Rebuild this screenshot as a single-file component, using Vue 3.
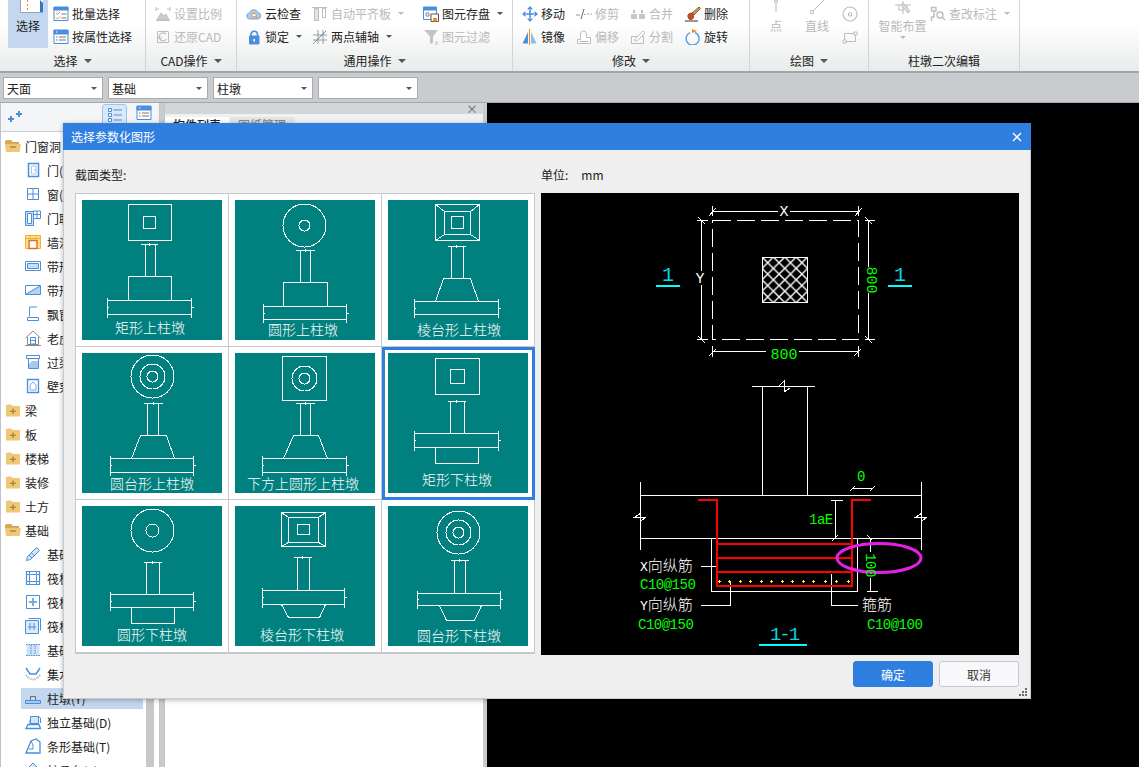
<template>
  <div class="app">
    <div class="ribbon">
      <div
        v-for="g in groups"
        :key="g.title"
        class="group"
        :style="{ width: g.width + 'px', paddingLeft: g.pad + 'px' }"
      >
        <div class="group-body">
          <div
            v-for="(col, i) in g.cols"
            :key="i"
            class="col"
            :style="{ width: col.width + 'px' }"
          >
            <div
              v-for="it in col.items"
              :key="it.label"
              :class="col.big ? 'big-item' : 'item'"
              :data-off="it.off ? 1 : null"
              :data-active="it.active ? 1 : null"
            >
              <Ico :name="it.icon" :size="col.big ? it.size || 16 : 16" />
              <span>{{ it.label }}</span>
              <i v-if="it.caret" class="caret small"></i>
            </div>
          </div>
        </div>
        <div class="group-title" :style="{ paddingRight: g.pad + 'px' }">
          {{ g.title }}<i v-if="g.caret" class="caret"></i>
        </div>
      </div>
    </div>

    <div class="selectors">
      <div v-for="(s, i) in selectors" :key="i" class="select">
        <span>{{ s }}</span><i class="caret small"></i>
      </div>
    </div>

    <div class="main">
      <div class="tree-panel">
        <div class="tree-tools">
          <Ico name="sparkle" class="sparkle" />
          <span class="tool-btn active"><Ico name="listview" /></span>
          <span class="tool-btn"><Ico name="attr" /></span>
        </div>
        <div class="tree-wrap">
          <div class="tree">
            <div
              v-for="r in tree"
              :key="r.label + r.icon"
              class="row"
              :class="{ child: r.child, selected: r.selected }"
            >
              <div class="row-in">
                <Ico :name="r.icon" />
                <span>{{ r.label }}</span>
              </div>
            </div>
          </div>
          <div class="scrollbar"></div>
        </div>
      </div>

      <div class="list-panel">
        <div class="list-head">×</div>
        <div class="tabs">
          <span class="tab on">构件列表</span>
          <span class="tab">图纸管理</span>
        </div>
      </div>
      <div class="canvas"></div>
    </div>

    <div class="dialog">
      <div class="dialog-title">
        <span>选择参数化图形</span>
        <svg width="10" height="10" viewBox="0 0 10 10">
          <path d="M1 1l8 8M9 1l-8 8" stroke="#fff" stroke-width="1.4" />
        </svg>
      </div>

      <div class="dialog-content">
        <div class="pane-left">
          <div class="pane-head">截面类型:</div>
          <div class="grid-wrap">
            <div class="tile-grid">
              <div
                v-for="t in tiles"
                :key="t.label"
                class="cell"
                :class="{ selected: t.selected }"
              >
                <svg class="tile" width="140" height="140" viewBox="0 0 140 140">
                  <g transform="translate(.5 .5)">
                    <path class="cad" :d="t.d" />
                    <circle
                      v-for="(c, i) in t.circles"
                      :key="i"
                      class="cad"
                      :cx="c[0]"
                      :cy="c[1]"
                      :r="c[2]"
                    />
                  </g>
                  <text class="tile-label" :x="t.lx" :y="t.ly">{{ t.label }}</text>
                </svg>
              </div>
            </div>
          </div>
        </div>

        <div class="pane-right">
          <div class="pane-head unit"><span>单位:</span><span>mm</span></div>
          <svg class="preview" width="478" height="462" viewBox="541 193 478 462">
            <defs>
              <pattern id="hatch" width="11.4" height="11.4" patternUnits="userSpaceOnUse" x="762" y="257">
                <path d="M0 0L11.4 11.4M11.4 0L0 11.4" stroke="#fff" stroke-width="1.4" />
              </pattern>
            </defs>

            <!-- plan view -->
            <g class="lines">
              <path class="dash" d="M712.5 220.5H858.5V339.5H712.5Z" />
              <rect x="762.5" y="257.5" width="45" height="45" fill="url(#hatch)" />
              <path d="M712 211.5H778M790 211.5H858M712.5 206V216M858.5 206V216M709 216L716 208M855 216L862 208" />
              <path d="M701.5 220V271M701.5 285V339M697 220.5H708M697 339.5H708M698 217L705 224M698 336L705 343" />
              <path d="M868.5 220V267M868.5 293V339M865 220.5H875M865 339.5H875M865 217L872 224M865 336L872 343" />
              <path d="M712 351.5H766M799 351.5H858M712.5 346V357M858.5 346V357M709 356L716 349M854 356L861 349" />
            </g>
            <text class="mono letter" x="784" y="216" text-anchor="middle">X</text>
            <text class="mono letter" x="700" y="283" text-anchor="middle">Y</text>
            <text class="mono green dim-text" x="784" y="359" text-anchor="middle">800</text>
            <text class="mono green dim-text" transform="translate(867 280) rotate(90)" text-anchor="middle">800</text>
            <text class="mono cyan sect" x="668" y="281" text-anchor="middle">1</text>
            <text class="mono cyan sect" x="900" y="281" text-anchor="middle">1</text>
            <path class="cyan-line" d="M656 286H680M888 286H912M759 645H807" />

            <!-- section view -->
            <g class="lines">
              <path d="M752 386.5H815M762.5 386V495M807.5 386V495M779 386L784 381V392L790 388" />
              <path d="M640 495.5H922M640 538.5H922M640.5 482V550M921.5 482V550" />
              <path d="M641 513L635 517H646L641 521M922 513L916 517H927L922 521" />
              <path d="M711.5 538V591.5H857.5V538" />
              <path d="M852 488.5H872M850 491L855 486M870 491L875 486" />
              <path d="M835.5 500V538M831 500.5H843M832 541L838 535" />
              <path d="M870.5 538V552M870.5 578V591M867 591.5H878M867 535L872 540" />
              <path d="M701 566.5H717M701 605.5H730.5V581" />
              <path d="M831.5 574V605.5H858" />
            </g>
            <path class="rebar" d="M698 500H717V586H852V500H871" />
            <path class="rebar" d="M717 544H852M717 558H852M717 572H852" />
            <path
              v-for="x in rebarDots"
              :key="x"
              class="dot"
              :d="`M${x - 1.5} 581.5h3M${x} 580v3`"
            />
            <ellipse class="loop" cx="879" cy="558" rx="42" ry="14.5" />

            <text class="mono green code" x="861" y="481" text-anchor="middle">0</text>
            <text class="mono green code" x="809" y="524">1aE</text>
            <text class="mono green code" transform="translate(866 565) rotate(90)" text-anchor="middle">100</text>
            <text class="mono white" x="640" y="571">X<tspan class="cjk">向纵筋</tspan></text>
            <text class="mono green code" x="640" y="589">C10@150</text>
            <text class="mono white" x="640" y="610">Y<tspan class="cjk">向纵筋</tspan></text>
            <text class="mono green code" x="638" y="629">C10@150</text>
            <text class="mono white" x="862" y="610"><tspan class="cjk">箍筋</tspan></text>
            <text class="mono green code" x="867" y="629">C10@100</text>
            <text class="mono cyan sect-title" x="784" y="640" text-anchor="middle">1-1</text>
          </svg>
        </div>
      </div>

      <div class="dialog-foot">
        <button class="btn primary">确定</button>
        <button class="btn">取消</button>
        <svg class="grip" width="8" height="8" viewBox="0 0 8 8">
          <path d="M6 0h2v2H6zM3 3h2v2H3zM6 3h2v2H6zM0 6h2v2H0zM3 6h2v2H3zM6 6h2v2H6z" fill="#6d6d6d" />
        </svg>
      </div>
    </div>
  </div>
</template>

<script setup>
import { h } from 'vue'

const BLUE = '#4a8fdc'
const GRAY = '#bdbdbd'
const ORG = '#ef8a21'
const TAN = '#eec877'

// [path, stroke, fill, strokeWidth, dash]
const icons = {
  select: [
    ['M0.5 0V12.5H29.5V0', '#8fa7c6', '#fff'],
    ['M7.5 0V12', ORG, 'none', 1, '2 2'],
    ['M20 0L29 9V12H20Z', 'none', '#2f78c4'],
  ],
  batch: [
    ['M1 1.5H15V14.5H1Z', BLUE, '#fff'],
    ['M1 1H15V4H1Z', BLUE, BLUE],
    ['M3 7l1.5 1.5L7 6M3 11.5L4.5 13 7 10.5', ORG, 'none'],
    ['M8.5 8H13.5M8.5 12H13.5', '#777', 'none'],
  ],
  attr: [
    ['M1 1.5H15V14.5H1Z', BLUE, '#fff'],
    ['M1 1H15V5H1Z', BLUE, BLUE],
    ['M3 3H4.5', '#fff', 'none'],
    ['M3 8H4.5M6 8H13M3 11H4.5M6 11H13', '#777', 'none'],
  ],
  listview: [
    ['M1.5 2.5H4.5V5.5H1.5ZM1.5 7.5H4.5V10.5H1.5ZM1.5 12.5H4.5V15.5H1.5Z', BLUE, '#fff'],
    ['M6.5 4H15M6.5 9H15M6.5 14H15', BLUE, 'none'],
  ],
  sparkle: [
    ['M1 11H7M4 8V14M9 6H15M12 3V9', BLUE, 'none', 2],
  ],
  scale: [
    ['M1 3H4M1 1V5M12 3H15M15 1V5M1 14.5H15', GRAY, 'none'],
    ['M2 14L6 7L9 10L11 8L14 14Z', GRAY, '#ccc'],
  ],
  restore: [
    ['M2.5 2.5H13.5V13.5H2.5Z', GRAY, 'none'],
    ['M11 5A4 4 0 1 0 11.5 10M5 6L3.5 9L7 9', GRAY, 'none', 1.2],
  ],
  cloud: [
    ['M4 13A3 3 0 0 1 3.5 7A4.5 4.5 0 0 1 12 6.5A3.3 3.3 0 0 1 12 13Z', '#78a9dc', '#a9ccef'],
    ['M8 7.5A1.8 1.8 0 1 1 8 11A1.8 1.8 0 1 1 8 7.5M9.5 10.5L11.5 12', ORG, '#fff'],
  ],
  lock: [
    ['M5 7V5A3.3 3.3 0 0 1 11.5 5V7', BLUE, 'none', 1.6],
    ['M3.5 7H13V15H3.5Z', BLUE, BLUE],
    ['M8.2 10V12.5', '#fff', 'none', 1.6],
  ],
  align: [
    ['M0 1.5H15', GRAY, 'none'],
    ['M2.5 2.5H6.5V14.5H2.5Z', GRAY, '#e4e4e4'],
    ['M10.5 2.5H13.5V11.5H10.5Z', GRAY, '#fff'],
  ],
  axis: [
    ['M1 6H15M1 11H15M6 1V15M11 1V15', '#9a9a9a', 'none'],
    ['M1 15L14 2', ORG, 'none'],
    ['M3 13L14 2', BLUE, 'none'],
  ],
  save: [
    ['M0.5 1.5H13.5V13.5H0.5Z', BLUE, '#fff'],
    ['M0.5 1H13.5V4H0.5Z', BLUE, BLUE],
    ['M3 7H6V10H3Z', '#888', 'none'],
    ['M8 8H15.5V15.5H8Z', '#555', '#fff'],
    ['M10 12H14V15.5H10Z', 'none', ORG],
  ],
  filter: [
    ['M1 1H15L10 7.5V14L7 15V7.5Z', 'none', '#c4c4c4'],
    ['M12 13H15M12 15H15', GRAY, 'none'],
  ],
  move: [
    ['M8 4V12M4 8H12', BLUE, 'none', 1.6],
    ['M8 0L11 3.5H5ZM8 16L5 12.5H11ZM0 8L3.5 5V11ZM16 8L12.5 11V5Z', 'none', BLUE],
  ],
  mirror: [
    ['M0.5 14.5L6 3V14.5Z', 'none', BLUE],
    ['M9 3L14.5 14.5H9Z', 'none', '#8cbbea'],
    ['M7.5 0V16', ORG, 'none'],
  ],
  trim: [
    ['M0 9H4M11 8H13M14.5 8H16M8 8.5H9.5', '#999', 'none'],
    ['M5 13L8 3', '#666', 'none'],
  ],
  offset: [
    ['M1.5 14.5V10.5H4.5V5A3 3 0 0 1 10.5 5V8.5H14.5V14.5Z', GRAY, '#fff'],
    ['M3.5 12.5H12.5', GRAY, 'none'],
  ],
  merge: [
    ['M1 8H7V13H1ZM9 8H15V13H9Z', 'none', '#c8c8c8'],
    ['M4 4V7M12 4V7', GRAY, 'none', 2],
  ],
  split: [
    ['M1.5 7.5H13.5V14.5H1.5Z', GRAY, 'none'],
    ['M5 10L13 2L15 4L7 12H5Z', GRAY, '#fff'],
  ],
  del: [
    ['M0 15H13', '#333', 'none'],
    ['M7 7L14 1L15.5 2.5L9 9Z', '#876236', '#c49a63'],
    ['M3 11A3 3 0 0 1 8 8L8.5 9.5A3 3 0 0 1 4 13Z', '#a4421c', '#c8501f'],
  ],
  rotate: [
    ['M10 3.5A6.5 6.5 0 1 1 5 3.6', '#5b9be0', 'none', 1.4],
    ['M7 4V0L12 2Z', 'none', ORG],
  ],
  point: [['M8 0V12', GRAY, 'none'], ['M6.5 0H9.5V2H6.5Z', GRAY, '#fff']],
  line: [['M3 12L15 0', GRAY, 'none'], ['M1.5 10.5H4.5V13.5H1.5Z', GRAY, '#fff']],
  circle: [
    ['M8 1A7 7 0 1 1 8 15A7 7 0 1 1 8 1Z', GRAY, 'none', 1.2],
    ['M6.5 7H9.5V10H6.5Z', GRAY, '#fff'],
  ],
  rect: [
    ['M2.5 4.5H13.5V12.5H2.5Z', GRAY, 'none'],
    ['M1 11H4V14H1ZM12 3H15V6H12Z', GRAY, '#fff'],
  ],
  smart: [
    ['M0 5H16M4 5V10M8 1V14M12 5V10M3 10H9', GRAY, 'none'],
    ['M8 3L15 11L13 13L6 5Z', GRAY, '#ddd'],
  ],
  review: [
    ['M1.5 1.5H6V5H1.5ZM4 5V11H1.5V15', GRAY, 'none', 1.4],
    ['M10 6A3 3 0 1 1 10 12A3 3 0 1 1 10 6M12 11L15 14', GRAY, '#fff', 1.4],
  ],
  folderOpen: [
    ['M0 3.5Q0 2 2 2H6L8 4H14V6H0Z', 'none', '#d8a957'],
    ['M0 6H16L14.5 14H1Z', 'none', TAN],
    ['M5 9H11', '#b4873c', 'none', 1.5],
  ],
  folder: [
    ['M1 4Q1 2.5 2.5 2.5H6L7.5 4H15V14.5H1Z', 'none', TAN],
    ['M8 6.5V12M5.2 9.2H10.8', '#b4873c', 'none', 1.5],
  ],
  door: [
    ['M3.5 1.5H13.5V14.5H3.5Z', BLUE, '#fff', 1.5],
    ['M6.5 4H11V12H6.5Z', '#a9c6e8', 'none'],
    ['M9.5 8H10.5', BLUE, 'none'],
  ],
  win: [
    ['M2.5 2.5H13.5V13.5H2.5Z', BLUE, '#fff'],
    ['M8 2.5V13.5M2.5 8H13.5', BLUE, 'none'],
  ],
  doorwin: [
    ['M0.5 1.5H8.5V15.5H0.5Z', BLUE, '#cfe0f5'],
    ['M2.5 3.5H6.5V13.5H2.5Z', BLUE, '#fff'],
    ['M8.5 1H15.5V8.5H8.5ZM12 1V8.5M8.5 4.5H15.5', BLUE, '#fff'],
  ],
  wall: [
    ['M0.5 1.5H15.5V14.5H0.5Z', '#f0b232', '#ffdf87'],
    ['M0.5 4.5H15.5M5 1.5V5M11 1.5V5', '#f0b232', 'none'],
    ['M4 6.5H12V14.5H4Z', '#e26c22', '#fff', 1.4],
  ],
  bandwin: [
    ['M0.5 3.5H15.5V12.5H0.5Z', BLUE, '#fff'],
    ['M2.5 5.5H13.5V10.5H2.5Z', BLUE, '#c8ddf3'],
  ],
  bandhole: [
    ['M0.5 3.5H15.5V12.5H0.5Z', BLUE, '#fff'],
    ['M1 12L15 4V12Z', 'none', '#b5d2f0'],
    ['M1 12L15 4', BLUE, 'none'],
  ],
  bay: [
    ['M4.5 1V10.5M4.5 1H12', '#5a8fc9', 'none'],
    ['M2.5 11.5H13.5V14.5H2.5Z', BLUE, '#fff'],
  ],
  house: [
    ['M0.5 8L8 1L15.5 8', '#888', 'none'],
    ['M2.5 7V14.5H13.5V7', '#888', 'none'],
    ['M5.5 7.5H10.5V14H5.5ZM5.5 10.5H10.5', BLUE, '#fff'],
    ['M0 15.5H16', '#888', 'none'],
  ],
  lintel: [
    ['M1.5 1.5H14.5V4.5H1.5Z', BLUE, '#fff'],
    ['M3.5 4.5V14.5H13.5V4.5', BLUE, 'none'],
    ['M4 14L4 10L7 7H13V14Z', 'none', '#a9c8ea'],
  ],
  niche: [
    ['M2.5 1.5H13.5V14.5H2.5Z', BLUE, '#fff', 1.3],
    ['M5 12V7L8 4L11 7V12Z', '#7daadf', 'none'],
  ],
  pencil: [
    ['M1.5 14.5L2.5 10.5L11.5 1.5L14.5 4.5L5.5 13.5Z', BLUE, '#d7e6f7'],
    ['M4 9L7 12M6.5 7L9 9.5', BLUE, 'none'],
  ],
  raft: [
    ['M1.5 1.5H14.5V14.5H1.5Z', BLUE, '#fff', 1.2],
    ['M4.5 4.5H11.5V11.5H4.5ZM1 4.5H4M12 4.5H15M1 11.5H4M12 11.5H15M4.5 1V4M11.5 1V4M4.5 12V15M11.5 12V15', BLUE, 'none'],
  ],
  cross: [
    ['M1.5 1.5H14.5V14.5H1.5Z', BLUE, '#fff'],
    ['M8 4V12M4 8H12', '#7daadf', 'none', 2],
  ],
  stack: [
    ['M3.5 0.5H15.5V12.5', BLUE, 'none'],
    ['M0.5 2.5H13.5V15.5H0.5Z', BLUE, '#dce9f7'],
    ['M5 5V12M9 5V12M3 9H11', BLUE, 'none'],
  ],
  strip: [
    ['M1.5 2H14.5V14H1.5Z', 'none', '#cfe2f6'],
    ['M1 2.5H15M1 13.5H15M6 3V13M10 3V13', BLUE, 'none', 1, '1.5 1'],
  ],
  pit: [
    ['M1 2L5 8H11L15 2', BLUE, 'none', 1.5],
    ['M1 9Q8 18 15 9', '#aaa', 'none', 2, '1 1'],
  ],
  pier: [
    ['M5.5 6.5H10.5V10.5H5.5Z', '#6d6d6d', 'none'],
    ['M0.5 10.5H15.5V13.5H0.5Z', BLUE, '#a8caee'],
  ],
  iso: [
    ['M5.5 2.5H13.5V9.5H5.5Z', BLUE, '#d5e5f6'],
    ['M1 14.5L3 10.5H14L15.5 14.5Z', BLUE, '#fff', 1.3],
    ['M5 10V6M13.5 2.5L15.5 4V9', BLUE, 'none'],
  ],
  stripf: [
    ['M1 15L3.5 9L6 3L11 1L15 4V15Z', BLUE, '#fff', 1.3],
    ['M6 3L8 7V11H4', BLUE, 'none'],
  ],
  cap: [['M8 1L14 7H2Z', BLUE, '#dce9f7']],
}

// small functional component, the same svg is needed in ribbon and tree
const Ico = (props) =>
  h(
    'svg',
    { width: props.size || 16, height: props.size || 16, viewBox: '0 0 16 16', style: 'flex:none;display:block' },
    (icons[props.name] || []).map(([d, stroke, fill, sw, dash]) =>
      h('path', { d, stroke, fill, 'stroke-width': sw || 1, 'stroke-dasharray': dash })
    )
  )
Ico.props = ['name', 'size']

const item = (icon, label, extra = {}) => ({ icon, label, ...extra })

const groups = [
  {
    title: '选择', caret: true, width: 146, pad: 8,
    cols: [
      { big: true, width: 45, items: [item('select', '选择', { active: true, size: 16 })] },
      { width: 85, items: [item('batch', '批量选择'), item('attr', '按属性选择')] },
    ],
  },
  {
    title: 'CAD操作', caret: true, width: 91, pad: 9,
    cols: [{ width: 80, items: [item('scale', '设置比例', { off: true }), item('restore', '还原CAD', { off: true })] }],
  },
  {
    title: '通用操作', caret: true, width: 276, pad: 9,
    cols: [
      { width: 66, items: [item('cloud', '云检查'), item('lock', '锁定', { caret: true })] },
      { width: 111, items: [item('align', '自动平齐板', { off: true, caret: true }), item('axis', '两点辅轴', { caret: true })] },
      { width: 85, items: [item('save', '图元存盘', { caret: true }), item('filter', '图元过滤', { off: true })] },
    ],
  },
  {
    title: '修改', caret: true, width: 237, pad: 9,
    cols: [
      { width: 54, items: [item('move', '移动'), item('mirror', '镜像')] },
      { width: 54, items: [item('trim', '修剪', { off: true }), item('offset', '偏移', { off: true })] },
      { width: 55, items: [item('merge', '合并', { off: true }), item('split', '分割', { off: true })] },
      { width: 55, items: [item('del', '删除'), item('rotate', '旋转')] },
    ],
  },
  {
    title: '绘图', caret: true, width: 119, pad: 10,
    cols: [
      { big: true, width: 32, items: [item('point', '点', { off: true })] },
      { big: true, width: 50, items: [item('line', '直线', { off: true })] },
      { width: 22, items: [item('circle', '', { off: true }), item('rect', ' ', { off: true })] },
    ],
  },
  {
    title: '柱墩二次编辑', caret: false, width: 151, pad: 6,
    cols: [
      { big: true, width: 55, items: [item('smart', '智能布置', { off: true, caret: true })] },
      { width: 85, items: [item('review', '查改标注', { off: true, caret: true })] },
    ],
  },
]

const selectors = ['天面', '基础', '柱墩', '']

const child = (icon, label, selected = false) => ({ icon, label, child: true, selected })
const tree = [
  { icon: 'folderOpen', label: '门窗洞' },
  child('door', '门(M)'),
  child('win', '窗(C)'),
  child('doorwin', '门联窗(A)'),
  child('wall', '墙洞(D)'),
  child('bandwin', '带形窗(C)'),
  child('bandhole', '带形洞'),
  child('bay', '飘窗(F)'),
  child('house', '老虎窗'),
  child('lintel', '过梁(G)'),
  child('niche', '壁龛(I)'),
  { icon: 'folder', label: '梁' },
  { icon: 'folder', label: '板' },
  { icon: 'folder', label: '楼梯' },
  { icon: 'folder', label: '装修' },
  { icon: 'folder', label: '土方' },
  { icon: 'folderOpen', label: '基础' },
  child('pencil', '基础梁(F)'),
  child('raft', '筏板基础(M)'),
  child('cross', '筏板主筋(R)'),
  child('stack', '筏板负筋(F)'),
  child('strip', '基础板带(W)'),
  child('pit', '集水坑(K)'),
  child('pier', '柱墩(Y)', true),
  child('iso', '独立基础(D)'),
  child('stripf', '条形基础(T)'),
  child('cap', '桩承台(V)'),
]

// thumbnail drawing helpers, coordinates are local to the 140px tile
const slab = (x1, x2, y1, y2) => {
  const mid = Math.round((y1 + y2) / 2)
  return `M${x1} ${y1}H${x2}M${x1} ${y2}H${x2}M${x1} ${y1 - 3}V${y2 + 3}M${x2} ${y1 - 3}V${y2 + 3}M${x1 - 1} ${mid}h2M${x2 - 1} ${mid}h3`
}
const column = (lx1, lx2, x1, x2, y1, y2) => {
  const c = Math.round((lx1 + lx2) / 2)
  return `M${lx1} ${y1}H${lx2}M${x1} ${y1}V${y2}M${x2} ${y1}V${y2}M${c} ${y1 - 2}v3`
}
const box = (x1, x2, y1, y2) => `M${x1} ${y1}H${x2}V${y2}H${x1}Z`
const trap = (x1, x2, y1, x3, x4, y2) => `M${x1} ${y1}H${x2}L${x4} ${y2}M${x1} ${y1}L${x3} ${y2}H${x4}`
const frustum = (o1, o2, oy1, oy2, i1, i2, iy1, iy2) =>
  box(o1, o2, oy1, oy2) + box(i1, i2, iy1, iy2) +
  `M${o1} ${oy1}L${i1} ${iy1}M${o2} ${oy1}L${i2} ${iy1}M${o1} ${oy2}L${i1} ${iy2}M${o2} ${oy2}L${i2} ${iy2}`

const tiles = [
  {
    label: '矩形上柱墩', lx: 68, ly: 133,
    d: box(46, 89, 4, 40) + box(61, 73, 16, 28) + column(58, 75, 63, 73, 44, 76) + box(46, 89, 76, 100) + slab(25, 109, 100, 114),
  },
  {
    label: '圆形上柱墩', lx: 68, ly: 135,
    circles: [[69, 25, 21.5], [69, 25, 5.5]],
    d: column(60, 79, 65, 75, 50, 82) + box(48, 92, 82, 106) + slab(28, 111, 106, 119),
  },
  {
    label: '棱台形上柱墩', lx: 71, ly: 135,
    d: frustum(47, 91, 4, 40, 56, 82, 11, 34) + box(63, 75, 16, 28) + column(59, 77, 63, 75, 46, 78) + trap(55, 82, 78, 47, 90, 101) + slab(26, 110, 101, 114),
  },
  {
    label: '圆台形上柱墩', lx: 70, ly: 136,
    circles: [[70, 23, 21.5], [70, 23, 12.5], [70, 23, 5.5]],
    d: column(61, 80, 65, 76, 50, 82) + trap(58, 84, 82, 49, 92, 105) + slab(28, 111, 105, 119),
  },
  {
    label: '下方上圆形上柱墩', lx: 68, ly: 136,
    circles: [[69, 25, 12.5], [69, 25, 5.5]],
    d: box(47, 91, 3, 47) + column(60, 79, 65, 75, 50, 82) + trap(58, 83, 82, 48, 92, 105) + slab(27, 111, 105, 119),
  },
  {
    label: '矩形下柱墩', lx: 69, ly: 132, selected: true,
    d: box(47, 91, 5, 41) + box(62, 76, 16, 30) + column(59, 77, 62, 76, 48, 80) + slab(26, 110, 80, 94) + box(47, 90, 94, 110),
  },
  {
    label: '圆形下柱墩', lx: 70, ly: 134,
    circles: [[70, 24, 21.5], [70, 24, 6.5]],
    d: column(61, 79, 64, 77, 56, 88) + slab(28, 111, 88, 101) + box(49, 92, 101, 117),
  },
  {
    label: '棱台形下柱墩', lx: 67, ly: 134,
    d: frustum(46, 90, 6, 40, 53, 83, 11, 36) + box(62, 74, 18, 28) + column(58, 76, 62, 74, 51, 84) + slab(27, 109, 84, 98) + trap(46, 90, 98, 53, 84, 111),
  },
  {
    label: '圆台形下柱墩', lx: 71, ly: 135,
    circles: [[70, 26, 21.5], [70, 26, 12.5], [70, 26, 5.5]],
    d: column(62, 80, 66, 77, 54, 87) + slab(29, 112, 87, 99) + trap(51, 93, 99, 58, 86, 114),
  },
]

const rebarDots = [719, 729, 740, 750, 761, 771, 782, 792, 803, 813, 825, 836, 848]
</script>

<style scoped>
.app {
  position: relative;
  width: 1139px;
  height: 767px;
  overflow: hidden;
  display: flex;
  flex-direction: column;
  background: #c9cccf;
  font-family: "Noto Sans CJK SC", "Liberation Sans", sans-serif;
  font-size: 12px;
  color: #222;
}

/* ribbon */
.ribbon {
  display: flex;
  height: 73px;
  flex: none;
  box-sizing: border-box;
  border-bottom: 2px solid #a2a5a8;
  background: linear-gradient(#ffffff 35%, #e9ebeb);
}
.group {
  box-sizing: border-box;
  height: 71px;
  flex: none;
  display: flex;
  flex-direction: column;
  border-right: 1px solid #d2d4d6;
}
.group-body {
  height: 50px;
  display: flex;
}
.group-title {
  height: 21px;
  display: flex;
  align-items: center;
  justify-content: center;
  gap: 6px;
}
.col {
  flex: none;
  padding-top: 2px;
  box-sizing: border-box;
}
.item {
  height: 23px;
  display: flex;
  align-items: center;
  gap: 3px;
  white-space: nowrap;
}
.item > span {
  margin-right: 4px;
}
.big-item {
  display: flex;
  flex-direction: column;
  align-items: center;
  height: 48px;
  margin-top: -2px;
  line-height: 20px;
  white-space: nowrap;
}
.big-item[data-active] {
  width: 40px;
  background: #c5d7ee;
}
.big-item[data-active] :deep(svg) {
  width: 30px;
  height: 16px;
}
[data-off] {
  color: #b9b9b9;
}
.caret {
  display: inline-block;
  flex: none;
  border-left: 4px solid transparent;
  border-right: 4px solid transparent;
  border-top: 4px solid #555;
}
.caret.small {
  border-left-width: 3px;
  border-right-width: 3px;
  border-top-width: 3px;
}
[data-off] .caret {
  border-top-color: #bbb;
}

/* selector strip */
.selectors {
  height: 30px;
  flex: none;
  box-sizing: border-box;
  padding: 4px 0 0 3px;
  display: flex;
  gap: 5px;
  border-bottom: 1px solid #a6a8ab;
}
.select {
  box-sizing: border-box;
  width: 100px;
  height: 22px;
  display: flex;
  align-items: center;
  justify-content: space-between;
  padding: 0 5px 0 3px;
  background: #fff;
  border: 1px solid #a9abae;
}

/* left panels */
.main {
  flex: 1;
  display: flex;
  min-height: 0;
}
.tree-panel {
  width: 160px;
  flex: none;
  box-sizing: border-box;
  display: flex;
  flex-direction: column;
  background: #fff;
  border-left: 1px solid #bfc3c9;
  border-right: 1px solid #c4c4c4;
}
.tree-tools {
  height: 28px;
  flex: none;
  display: flex;
  align-items: flex-start;
  border-bottom: 1px solid #c9ccd2;
  background: #f4f5f6;
}
.sparkle {
  margin: 5px 0 0 6px;
}
.tool-btn {
  box-sizing: border-box;
  width: 25px;
  height: 21px;
  padding: 1px 4px;
  margin-top: 1px;
}
.tool-btn.active {
  margin-left: 79px;
  margin-right: 5px;
  background: #dbe8f8;
  border: 1px solid #9fc3ec;
  border-radius: 3px;
}
.tree-wrap {
  flex: 1;
  display: flex;
  min-height: 0;
  padding-top: 2px;
}
.tree {
  width: 145px;
  flex: none;
  overflow: hidden;
}
.row {
  height: 24px;
  display: flex;
  align-items: center;
}
.row-in {
  flex: 1;
  min-width: 0;
  height: 21px;
  display: flex;
  align-items: center;
  gap: 4px;
  padding-left: 4px;
  white-space: nowrap;
}
.row.child .row-in {
  margin-left: 20px;
  margin-right: 3px;
  gap: 6px;
}
.row.selected .row-in {
  background: #c5d7ee;
}
.scrollbar {
  width: 8px;
  background: #c8c8c8;
}
.list-panel {
  width: 319px;
  margin-left: 4px;
  flex: none;
  box-sizing: border-box;
  background: #fff;
  border-left: 1px solid #c4c4c4;
}
.list-head {
  height: 11px;
  line-height: 12px;
  text-align: right;
  padding-right: 5px;
  color: #666;
  background: #d3d5d9;
}
.tabs {
  display: flex;
  height: 17px;
  padding-top: 3px;
  box-sizing: border-box;
  background: #f0f1f2;
  gap: 1px;
}
.tab {
  width: 64px;
  height: 16px;
  text-align: center;
  line-height: 16px;
  background: #fff;
  font-weight: 500;
}
.tab:not(.on) {
  background: #e4e4e4;
  color: #888;
}
.canvas {
  flex: 1;
  margin-left: 4px;
  background: #000;
}

/* dialog on top of everything */
.dialog {
  position: absolute;
  left: 63px;
  top: 123px;
  width: 968px;
  height: 576px;
  box-sizing: border-box;
  display: flex;
  flex-direction: column;
  background: #efefef;
  border: 1px solid #c6ccd6;
  border-top: none;
  box-shadow: 0 1px 5px rgba(0, 0, 0, 0.3);
}
.dialog-title {
  height: 27px;
  flex: none;
  margin: 0 -1px;
  padding: 0 9px 0 8px;
  display: flex;
  align-items: center;
  justify-content: space-between;
  color: #fff;
  background: #2f7fe0;
}
.dialog-content {
  flex: 1;
  display: flex;
  gap: 6px;
  padding-left: 11px;
}
.pane-left {
  width: 460px;
  flex: none;
}
.pane-right {
  width: 478px;
  flex: none;
}
.pane-head {
  height: 43px;
  box-sizing: border-box;
  padding-top: 5px;
  display: flex;
  align-items: center;
}
.unit {
  gap: 13px;
}
.grid-wrap {
  width: 460px;
  box-sizing: border-box;
  height: 461px;
  padding-bottom: 1px;
  background: #fff;
  border-bottom: 1px solid #c6c8cc;
}
.tile-grid {
  display: grid;
  grid-template-columns: repeat(3, 153px);
  grid-auto-rows: 153px;
  box-sizing: border-box;
  width: 460px;
  border-left: 1px solid #c6c8cc;
  border-top: 1px solid #c6c8cc;
  background: #fff;
}
.cell {
  box-sizing: border-box;
  padding: 6px;
  border-right: 1px solid #c6c8cc;
  border-bottom: 1px solid #c6c8cc;
  position: relative;
}
.cell.selected::after {
  content: "";
  position: absolute;
  inset: 0;
  border: 3px solid #2f7fe0;
  margin: 0 -1px -1px 0;
}
.tile {
  display: block;
  background: #00807e;
  shape-rendering: crispEdges;
}
.cad {
  fill: none;
  stroke: #fff;
  stroke-width: 1;
}
.tile-label {
  fill: #fff;
  font-size: 14px;
  font-weight: 300;
  text-anchor: middle;
  font-family: "Noto Sans CJK SC", sans-serif;
}
.preview {
  display: block;
  background: #000;
}
.lines path,
.lines rect {
  stroke: #fff;
  stroke-width: 1;
  shape-rendering: crispEdges;
}
.lines path {
  fill: none;
}
.lines .dash {
  stroke-dasharray: 18 6;
}
.mono {
  font-family: "Liberation Mono", monospace;
  font-size: 13px;
}
.letter {
  fill: #fff;
  font-size: 15px;
}
.dim-text {
  font-size: 15px;
}
.code {
  font-size: 14px;
  letter-spacing: -0.5px;
}
.white { fill: #fff; }
.green { fill: #00ff00; }
.cyan { fill: #00d8e8; }
.sect {
  font-size: 20px;
}
.sect-title {
  font-size: 19px;
  letter-spacing: -2px;
}
.cjk {
  font-family: "Noto Sans CJK SC", sans-serif;
  font-size: 15px;
  font-weight: 300;
}
.cyan-line {
  stroke: #00ffff;
  stroke-width: 2;
  fill: none;
  shape-rendering: crispEdges;
}
.rebar {
  fill: none;
  stroke: #ff0000;
  stroke-width: 2;
  shape-rendering: crispEdges;
}
.dot {
  stroke: #ffff00;
  stroke-width: 1;
  fill: none;
  shape-rendering: crispEdges;
}
.loop {
  fill: none;
  stroke: #e61fe6;
  stroke-width: 3;
}
.dialog-foot {
  height: 44px;
  flex: none;
  box-sizing: border-box;
  padding: 6px 11px 0 0;
  display: flex;
  justify-content: flex-end;
  gap: 6px;
  position: relative;
}
.btn {
  width: 80px;
  height: 26px;
  box-sizing: border-box;
  font: inherit;
  color: #333;
  background: #f9f9fb;
  border: 1px solid #c3c9d4;
  border-radius: 3px;
}
.btn.primary {
  color: #fff;
  background: #2f7fe0;
  border-color: #2f7fe0;
}
.grip {
  position: absolute;
  right: 3px;
  bottom: 3px;
}
</style>

<style>
html,
body {
  margin: 0;
  background: #000;
}
</style>
